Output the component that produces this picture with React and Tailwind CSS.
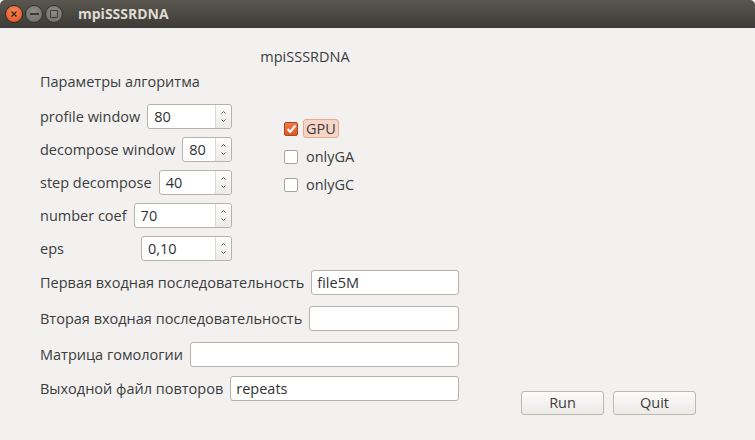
import React from "react";

const font = { fontFamily: '"Open Sans", "DejaVu Sans", sans-serif' };

function SpinBox({ value, className = "" }) {
  return (
    <div className={`flex h-[25px] rounded-[3px] border border-[#b6b2ac] bg-white ${className}`}>
      <div className="flex-1 pl-[6px] flex items-center text-[#333]">{value}</div>
      <div className="w-[16px] flex flex-col items-center justify-center gap-[5px] border-l border-[#dcd9d4] rounded-r-[3px] bg-gradient-to-b from-[#fdfdfc] to-[#ecebe8]">
        <svg width="5" height="3" viewBox="0 0 5 3">
          <path d="M0.5 2.5 L2.5 0.5 L4.5 2.5" stroke="#666" strokeWidth="1" fill="none" />
        </svg>
        <svg width="5" height="3" viewBox="0 0 5 3">
          <path d="M0.5 0.5 L2.5 2.5 L4.5 0.5" stroke="#666" strokeWidth="1" fill="none" />
        </svg>
      </div>
    </div>
  );
}

function SpinRow({ label, value, fixed }) {
  return (
    <div className="flex items-center gap-[7px]">
      <span className={`whitespace-nowrap ${fixed ? "flex-1" : "shrink-0"}`}>{label}</span>
      <SpinBox value={value} className={fixed || "flex-1"} />
    </div>
  );
}

function LineRow({ label, value }) {
  return (
    <div className="flex items-center gap-[7px]">
      <span className="whitespace-nowrap shrink-0">{label}</span>
      <div className="flex-1 h-[25px] rounded-[3px] border border-[#b6b2ac] bg-white pl-[5px] flex items-center text-[#333]">
        {value}
      </div>
    </div>
  );
}

function Check({ label, checked }) {
  return (
    <div className="flex items-center h-[19px]">
      {checked ? (
        <div className="w-[14px] h-[14px] rounded-[2px] border border-[#b4461d] bg-gradient-to-b from-[#f07a4a] to-[#dd5524] flex items-center justify-center">
          <svg width="11" height="10" viewBox="0 0 11 10">
            <path d="M1.5 5 L4.2 8 L9.5 1.5" stroke="#fff" strokeWidth="2" fill="none" />
          </svg>
        </div>
      ) : (
        <div className="w-[14px] h-[14px] rounded-[2px] border border-[#a8a49e] bg-white" />
      )}
      <span
        className={`ml-[5px] px-[2px] h-[19px] flex items-center rounded-[3px] ${
          checked ? "border border-[#eba88a] bg-[#f6d6c7]" : "border border-transparent"
        }`}
      >
        {label}
      </span>
    </div>
  );
}

export default function App() {
  return (
    <div className="w-[755px] h-[440px] bg-[#f2f1f0] flex flex-col text-[14.5px] leading-[18px] text-[#3c3c3c]" style={font}>
      <div className="h-[28px] shrink-0 flex items-center bg-gradient-to-b from-[#59574f] to-[#3c3b37] rounded-t-[5px]">
        <div className="flex items-center gap-[2px] pl-[5px]">
          <div className="w-[18px] h-[18px] rounded-full border border-[#3a2a22] bg-[radial-gradient(circle_at_50%_35%,#f58b5a,#df4f1c)] flex items-center justify-center">
            <svg width="8" height="8" viewBox="0 0 8 8">
              <path d="M1.5 1.5 L6.5 6.5 M6.5 1.5 L1.5 6.5" stroke="#3a2418" strokeWidth="1.4" />
            </svg>
          </div>
          <div className="w-[18px] h-[18px] rounded-full border border-[#33322e] bg-[radial-gradient(circle_at_50%_35%,#8e8c86,#6c6a64)] flex items-center justify-center">
            <div className="w-[9px] h-[2px] bg-[#3c3b37]" />
          </div>
          <div className="w-[18px] h-[18px] rounded-full border border-[#33322e] bg-[radial-gradient(circle_at_50%_35%,#8e8c86,#6c6a64)] flex items-center justify-center">
            <div className="w-[8px] h-[8px] border-[1.5px] border-[#3c3b37] rounded-[1px]" />
          </div>
        </div>
        <span className="ml-[15px] text-[14px] font-bold text-[#dfdbd2]">mpiSSSRDNA</span>
      </div>

      <div className="flex flex-col pl-[40px]">
        <div className="pt-[20px] w-[530px] text-center">mpiSSSRDNA</div>
        <div className="mt-[7px]">Параметры алгоритма</div>

        <div className="mt-[13px] flex">
          <div className="w-[192px] flex flex-col gap-[8px]">
            <SpinRow label="profile window" value="80" />
            <SpinRow label="decompose window" value="80" />
            <SpinRow label="step decompose" value="40" />
            <SpinRow label="number coef" value="70" />
            <SpinRow label="eps" value="0,10" fixed="w-[91px]" />
          </div>
          <div className="ml-[52px] pt-[15px] flex flex-col gap-[9px]">
            <Check label="GPU" checked />
            <Check label="onlyGA" />
            <Check label="onlyGC" />
          </div>
        </div>

        <div className="mt-[9px] flex">
          <div className="w-[419px] flex flex-col">
            <LineRow label="Первая входная последовательность" value="file5M" />
            <div className="mt-[11px]">
              <LineRow label="Вторая входная последовательность" value="" />
            </div>
            <div className="mt-[11px]">
              <LineRow label="Матрица гомологии" value="" />
            </div>
            <div className="mt-[9px]">
              <LineRow label="Выходной файл повторов" value="repeats" />
            </div>
          </div>
          <div className="ml-[62px] mt-[121px] flex gap-[9px]">
            <button className="w-[83px] h-[24px] rounded-[3px] border border-[#bcb8b2] bg-gradient-to-b from-[#fbfbfa] to-[#ebeae7] text-[#3c3c3c]">
              Run
            </button>
            <button className="w-[83px] h-[24px] rounded-[3px] border border-[#bcb8b2] bg-gradient-to-b from-[#fbfbfa] to-[#ebeae7] text-[#3c3c3c]">
              Quit
            </button>
          </div>
        </div>
      </div>
    </div>
  );
}
